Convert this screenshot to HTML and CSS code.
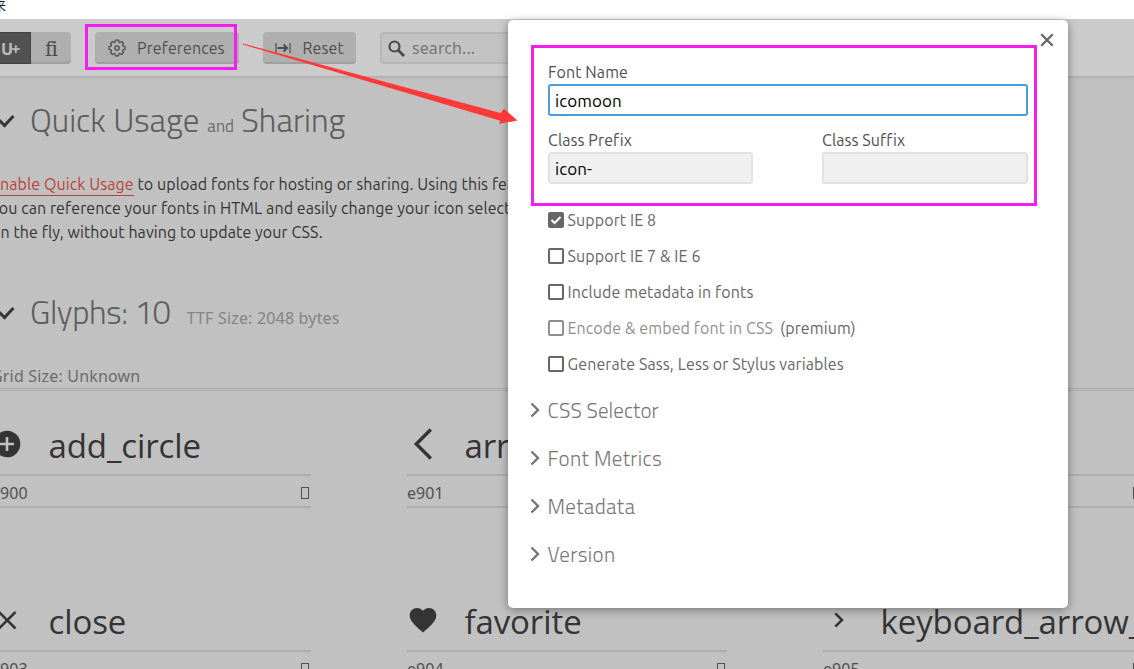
FILE: index.html
```html
<!DOCTYPE html>
<html lang="en">
<head>
<meta charset="utf-8">
<title>IcoMoon App</title>
<link rel="stylesheet" href="styles.css">
</head>
<body>
<div class="strip"><span class="strip-text">来</span></div>
<header class="toolbar">
  <div class="toggle"><span class="toggle-on">U+</span><span class="toggle-off">fi</span></div>
  <button class="btn btn-pref">
    <svg width="18" height="18" viewBox="0 0 18 18" fill="none" stroke="currentColor" stroke-width="1.25" stroke-linejoin="round"><path d="M7.5 1.2h3l.4 2 1 .4 1.700-1.100 2 2-1.100 1.700.5 1 2 .4v2.800l-2 .4-.5 1 1.100 1.700-2 2-1.700-1.100-1 .4-.4 2h-3l-.4-2-1-.4-1.700 1.100-2-2 1.100-1.700-.5-1-2-.4V7.600l2-.4.5-1-1.100-1.700 2-2 1.700 1.100 1-.4z"/><circle cx="9" cy="9" r="2.200"/></svg>
    <span>Preferences</span>
  </button>
  <button class="btn btn-reset">
    <svg width="16" height="12" viewBox="0 0 16 12" fill="none" stroke="currentColor"><path d="M1 1v10M15 1v10" stroke-width="1.200"/><path d="M2.500 6H12M8.500 2.500 12 6 8.500 9.500" stroke-width="2"/></svg>
    <span>Reset</span>
  </button>
  <div class="search">
    <svg width="17" height="17" viewBox="0 0 17 17" fill="none" stroke="#4a4a4a"><circle cx="6.500" cy="6.500" r="5" stroke-width="2.200"/><path d="M10.200 10.200 16 16" stroke-width="2.800"/></svg>
    <span>search...</span>
  </div>
</header>
<main class="content">
  <h1 class="heading heading-usage">
    <svg class="tick" width="18" height="16" viewBox="0 0 18 16" fill="none" stroke="#343434" stroke-width="3"><path d="M2 7l5.500 5.500L16.500 3"/></svg>
    <span>Quick Usage</span><small class="t-and">and</small><span>Sharing</span>
  </h1>
  <p class="intro"><span class="line"><a class="link">Enable Quick Usage</a> to upload fonts for hosting or sharing. Using this feature,</span><span class="line">you can reference your fonts in HTML and easily change your icon selection</span><span class="line">on the fly, without having to update your CSS.</span></p>
  <h1 class="heading heading-glyphs">
    <svg class="tick" width="18" height="16" viewBox="0 0 18 16" fill="none" stroke="#343434" stroke-width="3"><path d="M2 7l5.500 5.500L16.500 3"/></svg>
    <span class="t-glyphs">Glyphs: 10</span><small class="t-ttf">TTF Size: 2048 bytes</small>
  </h1>
  <div class="gridsize">Grid Size: Unknown</div>
  <section class="glyphs">
    <article class="glyph">
      <div class="glyph-top"><svg width="32" height="32" viewBox="0 0 32 32"><circle cx="16" cy="16" r="13.300" fill="#343434"/><path d="M16 9v14M9 16h14" stroke="#c1c1c1" stroke-width="2.600"/></svg><span class="g-name">add_circle</span></div>
      <div class="glyph-code"><span>e900</span><i class="tofu"></i></div>
    </article>
    <article class="glyph">
      <div class="glyph-top"><svg width="32" height="32" viewBox="0 0 32 32" fill="none" stroke="#343434" stroke-width="3.400"><path d="M23.800 1.500 9.300 16l14.500 14.500"/></svg><span class="g-name">arrow</span></div>
      <div class="glyph-code"><span>e901</span><i class="tofu"></i></div>
    </article>
    <article class="glyph">
      <div class="glyph-top"></div>
      <div class="glyph-code"><span></span><i class="tofu"></i></div>
    </article>
    <article class="glyph">
      <div class="glyph-top"><svg width="32" height="32" viewBox="0 0 32 32" fill="none" stroke="#343434" stroke-width="2.500"><path d="M8 8l16.500 16.500M24.500 8 8 24.500"/></svg><span class="g-name">close</span></div>
      <div class="glyph-code"><span>e903</span><i class="tofu"></i></div>
    </article>
    <article class="glyph">
      <div class="glyph-top"><svg width="32" height="32" viewBox="0 0 32 32" fill="#343434"><path d="M16 28.500l-1.900-1.750C7.300 20.600 2.700 16.500 2.700 11.400 2.700 7.200 5.900 4 10 4c2.300 0 4.600 1.100 6 2.800C17.400 5.100 19.700 4 22 4c4.100 0 7.300 3.200 7.300 7.400 0 5.100-4.600 9.200-11.400 15.350z"/></svg><span class="g-name">favorite</span></div>
      <div class="glyph-code"><span>e904</span><i class="tofu"></i></div>
    </article>
    <article class="glyph">
      <div class="glyph-top"><svg width="32" height="32" viewBox="0 0 32 32" fill="none" stroke="#343434" stroke-width="2.500"><path d="M12.300 9.300 19 16l-6.700 6.700"/></svg><span class="g-name">keyboard_arrow_</span></div>
      <div class="glyph-code"><span>e905</span><i class="tofu"></i></div>
    </article>
  </section>
</main>
<div class="modal">
  <svg class="close" width="14" height="14" viewBox="0 0 14 14" stroke="#666" stroke-width="2.300"><path d="M1.300 1.300l11.400 11.400M12.700 1.300 1.300 12.700"/></svg>
  <label class="label">Font Name</label>
  <div class="field field-focus">icomoon</div>
  <div class="pair">
    <div><label class="label">Class Prefix</label><div class="field">icon-</div></div>
    <div><label class="label">Class Suffix</label><div class="field"></div></div>
  </div>
  <div class="checks">
    <div class="check"><span class="box box-on"><svg width="12" height="12" viewBox="0 0 12 12" fill="none" stroke="#fff" stroke-width="2"><path d="M1.500 6l3 3 6-6"/></svg></span><span>Support IE 8</span></div>
    <div class="check"><span class="box"></span><span>Support IE 7 &amp; IE 6</span></div>
    <div class="check"><span class="box"></span><span>Include metadata in fonts</span></div>
    <div class="check"><span class="box box-dim"></span><span class="dim">Encode &amp; embed font in CSS</span><span class="premium">(premium)</span></div>
    <div class="check"><span class="box"></span><span>Generate Sass, Less or Stylus variables</span></div>
  </div>
  <div class="fold"><svg width="10" height="16" viewBox="0 0 10 16" fill="none" stroke="#777" stroke-width="2.400"><path d="M1.500 1.500 8 8l-6.500 6.500"/></svg><span>CSS Selector</span></div>
  <div class="fold fold-wide"><svg width="10" height="16" viewBox="0 0 10 16" fill="none" stroke="#777" stroke-width="2.400"><path d="M1.500 1.500 8 8l-6.500 6.500"/></svg><span>Font Metrics</span></div>
  <div class="fold fold-wide"><svg width="10" height="16" viewBox="0 0 10 16" fill="none" stroke="#777" stroke-width="2.400"><path d="M1.500 1.500 8 8l-6.500 6.500"/></svg><span>Metadata</span></div>
  <div class="fold fold-wide"><svg width="10" height="16" viewBox="0 0 10 16" fill="none" stroke="#777" stroke-width="2.400"><path d="M1.500 1.500 8 8l-6.500 6.500"/></svg><span>Version</span></div>
</div>
<div class="mark mark-pref"></div>
<div class="mark mark-form"></div>
<svg class="arrow" width="280" height="84" viewBox="240 42 280 84"><path d="M243 43.600 500.500 113l3.500-4.200 13.500 11.700-18.500 3.300 1.300-3L243 44.600z" fill="#ff3a38"/></svg>
</body>
</html>
```
FILE: styles.css
```css
* { box-sizing: border-box; }
body {
  margin: 0;
  width: 1134px;
  height: 669px;
  overflow: hidden;
  position: relative;
  background: #c1c1c1;
  font: 16px/24px Ubuntu, "Noto Sans", sans-serif;
  letter-spacing: .09px;
  color: #343434;
  white-space: nowrap;
}
svg { flex: none; display: block; }

.strip { height: 20px; background: #fff; border-bottom: 1px solid #d0d0d0; overflow: hidden; }
.strip-text { display: block; margin: -2px 0 0 -7px; font: 13px/14px "Noto Sans CJK SC", sans-serif; color: #222; }

.toolbar {
  height: 57px;
  background: #cbcbcb;
  border-bottom: 1px solid #b0b0b0;
  box-shadow: 0 1px 2px rgba(0, 0, 0, .08);
  display: flex;
  align-items: flex-start;
  padding-top: 12px;
  color: #4e4e4e;
}
.toggle { display: flex; width: 71px; height: 32px; border-radius: 0 4px 4px 0; overflow: hidden; background: #afafaf; box-shadow: inset 0 -2px #9e9e9e; }
.toggle-on { width: 31px; background: #515151; border: 1px solid #434343; border-left: 0; color: #bbb; font: 700 16px/32px "Noto Sans", sans-serif; padding-left: 1px; letter-spacing: -1.8px; }
.toggle-off { flex: 1; text-align: center; font: 20px/33px "Noto Serif", "DejaVu Serif", serif; letter-spacing: -.8px; }
.btn { display: flex; align-items: center; height: 32px; padding: 0; border: 0; border-radius: 4px; background: #afafaf; box-shadow: inset 0 -2px #9e9e9e; color: #4e4e4e; font: 16px/32px Ubuntu, "Noto Sans", sans-serif; letter-spacing: .1px; }
.btn-pref { width: 144px; margin-left: 24px; padding-left: 13px; gap: 11px; }
.btn-reset { width: 93px; margin-left: 24px; padding-left: 12px; gap: 11.5px; }
.search { display: flex; align-items: center; gap: 7px; width: 240px; height: 32px; margin-left: 24px; padding-left: 6px; border: 2px solid #b7b7b7; border-radius: 4px; background: #c3c3c3; color: #767676; font-family: "Noto Sans", sans-serif; }

.content { margin-left: -9px; }
.heading { display: flex; align-items: baseline; margin: 0; font: 300 33px/48px "Titillium Web", "Open Sans", sans-serif; letter-spacing: 0; color: #5d5d5d; }
.heading-usage { height: 95px; padding-top: 19px; }
.heading-glyphs { height: 120px; padding-top: 44px; }
.tick { margin: 17px 15px 0 6px; align-self: flex-start; }
.t-glyphs { letter-spacing: -.4px; }
.t-and { font-size: 17px; margin: 0 7px 0 8px; font-weight: 400; color: #6c6c6c; }
.t-ttf { font: 16px "Noto Sans", sans-serif; margin-left: 16px; letter-spacing: .18px; color: #848484; }
.intro { margin: 0; height: 72px; }
.line { display: block; }
.link { color: #bb4238; border-bottom: 1px solid #bb4238; padding-bottom: 2px; }
.gridsize { height: 27px; border-bottom: 3px double #aaa; color: #6b6b6b; font-family: "Noto Sans", sans-serif; letter-spacing: .18px; }

.glyphs { display: grid; grid-template-columns: repeat(3, 320px); gap: 59px 96px; }
.glyph { height: 117px; }
.glyph-top { display: flex; align-items: center; height: 83px; padding-top: 22px; gap: 26px; }
.g-name { font: 33px/46px "Open Sans", sans-serif; padding-top: 5px; letter-spacing: -.1px; margin-left: -.5px; color: #343434; }
.glyph-code { height: 34px; border-top: 2px solid #aeaeae; border-bottom: 2px solid #aeaeae; display: flex; justify-content: space-between; align-items: center; color: #505050; padding-top: 4px; font-family: "Noto Sans", sans-serif; }
.tofu { width: 8px; height: 12px; border: 1px solid #505050; margin-right: 2px; }

.modal { position: absolute; left: 508px; top: 20px; width: 560px; height: 588px; padding: 40px 40px 0; background: #fff; border-radius: 5px; box-shadow: 0 2px 10px rgba(0, 0, 0, .4); color: #5b5b5b; }
.close { position: absolute; right: 14px; top: 13px; }
.label { display: block; height: 24px; color: #505050; }
.field { height: 32px; border: 2px solid #e2e2e2; border-radius: 3px; background: #f0f0f0; padding: 0 5px; font-size: 17px; line-height: 30px; color: #000; }
.field-focus { border-color: #469fda; background: #fff; }
.pair { display: grid; grid-template-columns: 205px 206px; justify-content: space-between; margin-top: 12px; }
.checks { margin: 18px 0 0 -.5px; height: 184px; letter-spacing: .11px; }
.check { display: flex; align-items: center; height: 36px; gap: 4px; color: #666; }
.box { flex: none; width: 16px; height: 16px; border: 2px solid #666; border-radius: 2px; }
.box-on { background: #666; }
.box-dim { border-color: #8f8f8f; }
.dim { color: #8f8f8f; }
.premium { margin-left: 3px; }
.fold { display: flex; align-items: center; height: 48px; margin-left: -18px; gap: 7.600px; font: 300 21px/48px "Titillium Web", "Open Sans", sans-serif; letter-spacing: .05px; color: #777; }
.fold-wide { letter-spacing: .35px; }

.mark { position: absolute; border: 3px solid #f41df4; }
.mark-pref { left: 85px; top: 24px; width: 152px; height: 46px; }
.mark-form { left: 531px; top: 45px; width: 506px; height: 161px; }
.arrow { position: absolute; left: 240px; top: 42px; }
```
